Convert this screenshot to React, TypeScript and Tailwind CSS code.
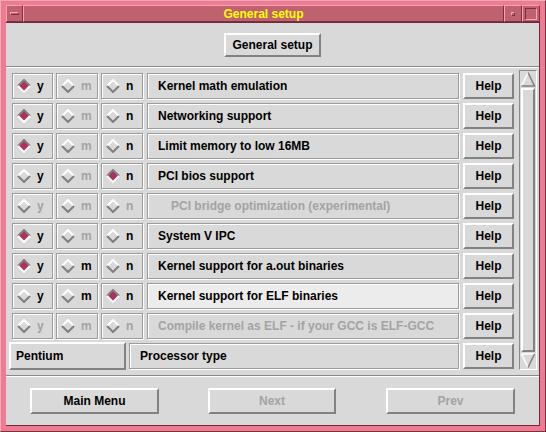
import React from 'react'

type Choice = 'y' | 'm' | 'n' | null

type Row = {
  label: string
  sel: Choice
  mOk: boolean
  disabled?: boolean
  indent?: boolean
  active?: boolean
}

const rows: Row[] = [
  { label: 'Kernel math emulation', sel: 'y', mOk: false },
  { label: 'Networking support', sel: 'y', mOk: false },
  { label: 'Limit memory to low 16MB', sel: 'y', mOk: false },
  { label: 'PCI bios support', sel: 'n', mOk: false },
  { label: 'PCI bridge optimization (experimental)', sel: null, mOk: false, disabled: true, indent: true },
  { label: 'System V IPC', sel: 'y', mOk: false },
  { label: 'Kernel support for a.out binaries', sel: 'y', mOk: true },
  { label: 'Kernel support for ELF binaries', sel: 'n', mOk: true, active: true },
  { label: 'Compile kernel as ELF - if your GCC is ELF-GCC', sel: null, mOk: false, disabled: true },
]

const raised = 'border-2 border-t-white border-l-white border-b-[#828282] border-r-[#828282]'
const groove = 'border border-[#9c9c9c] shadow-[inset_1px_1px_0_#fff,1px_1px_0_#fff]'

function Diamond({ on }: { on: boolean }) {
  return (
    <svg width="14" height="14" viewBox="0 0 14 14" className="shrink-0">
      <polygon points="7,1 13,7 7,13 1,7" fill={on ? '#b03060' : '#d9d9d9'} />
      <polyline points="1,7 7,1 13,7" fill="none" stroke={on ? '#7f7f7f' : '#ffffff'} strokeWidth="2" />
      <polyline points="1,7 7,13 13,7" fill="none" stroke={on ? '#ffffff' : '#7f7f7f'} strokeWidth="2" />
    </svg>
  )
}

function Radio({ letter, on, dim, w }: { letter: string; on: boolean; dim: boolean; w: string }) {
  return (
    <div className={`${groove} ${w} h-[26px] flex items-center pl-[4px] gap-[6px]`}>
      <Diamond on={on} />
      <span className={dim ? 'text-[#a3a3a3]' : 'text-black'}>{letter}</span>
    </div>
  )
}

function HelpButton() {
  return (
    <div className={`${raised} w-[51px] h-[26px] flex items-center justify-center`}>Help</div>
  )
}

function TitleBar() {
  return (
    <div className="flex h-[18px] bg-[#c0616f] border-b border-[#6e2a3a]">
      <div className="w-[17px] border border-t-[#f6a3b3] border-l-[#f6a3b3] border-b-[#7a3242] border-r-[#7a3242] flex items-center justify-center">
        <div className="w-[9px] h-[3px] border border-t-[#f6a3b3] border-l-[#f6a3b3] border-b-[#7a3242] border-r-[#7a3242]" />
      </div>
      <div className="flex-1 border border-t-[#f6a3b3] border-l-[#f6a3b3] border-b-[#7a3242] border-r-[#7a3242] flex items-center justify-center text-[#ffff00] leading-none">
        General setup
      </div>
      <div className="w-[18px] border border-t-[#f6a3b3] border-l-[#f6a3b3] border-b-[#7a3242] border-r-[#7a3242] flex items-center justify-center">
        <div className="w-[4px] h-[4px] border border-t-[#f6a3b3] border-l-[#f6a3b3] border-b-[#7a3242] border-r-[#7a3242]" />
      </div>
      <div className="w-[18px] border border-t-[#f6a3b3] border-l-[#f6a3b3] border-b-[#7a3242] border-r-[#7a3242] flex items-center justify-center">
        <div className="w-[12px] h-[12px] border border-t-[#7a3242] border-l-[#7a3242] border-b-[#f6a3b3] border-r-[#f6a3b3]" />
      </div>
    </div>
  )
}

function ScrollBar() {
  return (
    <div className="w-[18px] h-[300px] border border-t-[#8a8a8a] border-l-[#8a8a8a] border-b-white border-r-white flex flex-col">
      <svg width="16" height="17" viewBox="0 0 16 17" className="shrink-0">
        <polyline points="1.5,15 8,1.5" fill="none" stroke="#ffffff" strokeWidth="1.5" />
        <polyline points="8,1.5 14.5,15 1.5,15" fill="none" stroke="#7f7f7f" strokeWidth="1.5" />
      </svg>
      <div className={`${raised} flex-1 mx-[1px]`} />
      <svg width="16" height="17" viewBox="0 0 16 17" className="shrink-0">
        <polyline points="1.5,2 14.5,2" fill="none" stroke="#ffffff" strokeWidth="1.5" />
        <polyline points="1.5,2 8,15.5" fill="none" stroke="#ffffff" strokeWidth="1.5" />
        <polyline points="8,15.5 14.5,2" fill="none" stroke="#7f7f7f" strokeWidth="1.5" />
      </svg>
    </div>
  )
}

function OptionRow({ row }: { row: Row }) {
  const dis = !!row.disabled
  return (
    <div className="flex items-center h-[26px]">
      <Radio letter="y" on={row.sel === 'y'} dim={dis} w="w-[41px]" />
      <div className="w-[3px]" />
      <Radio letter="m" on={row.sel === 'm'} dim={dis || !row.mOk} w="w-[42px]" />
      <div className="w-[3px]" />
      <Radio letter="n" on={row.sel === 'n'} dim={dis} w="w-[42px]" />
      <div className="w-[4px]" />
      <div
        className={`${groove} w-[312px] h-[26px] flex items-center ${row.indent ? 'pl-[23px]' : 'pl-[10px]'} ${
          row.active ? 'bg-[#ececec]' : ''
        } ${dis ? 'text-[#a3a3a3]' : 'text-black'} whitespace-nowrap overflow-hidden`}
      >
        {row.label}
      </div>
      <div className="w-[4px]" />
      <HelpButton />
    </div>
  )
}

export default function App() {
  return (
    <div className="w-[546px] h-[432px] bg-[#ee7b92] border border-t-[#f8aab8] border-l-[#f8aab8] border-b-[#7a3242] border-r-[#7a3242] pt-[4px] px-[5px] pb-[5px] flex flex-col font-['Liberation_Sans',Arial,sans-serif] text-[12px] font-bold select-none">
      <TitleBar />
      <div className="flex-1 bg-[#d9d9d9] flex flex-col border-b border-r border-[#6e2a3a]">
        {/* header */}
        <div className="h-[43px] flex justify-center pt-[10px]">
          <div className={`${raised} w-[97px] h-[24px] flex items-center justify-center`}>General setup</div>
        </div>
        <div className="border-t border-[#8a8a8a] border-b border-b-white" />

        {/* options */}
        <div className="flex pl-[6px] pt-[2px]">
          <div className="flex flex-col gap-[4px] pt-[3px]">
            {rows.map(r => (
              <OptionRow key={r.label} row={r} />
            ))}
            <div className="flex items-center h-[28px] ml-[-3px] mt-[-1px]">
              <div className={`${raised} w-[117px] h-[28px] flex items-center pl-[5px]`}>Pentium</div>
              <div className="w-[3px]" />
              <div className={`${groove} w-[330px] h-[26px] flex items-center pl-[10px]`}>Processor type</div>
              <div className="w-[4px]" />
              <HelpButton />
            </div>
          </div>
          <div className="w-[5px]" />
          <ScrollBar />
        </div>

        <div className="mt-[5px] border-t border-[#8a8a8a] border-b border-b-white" />

        {/* bottom buttons */}
        <div className="flex pl-[24px] pt-[11px]">
          <div className={`${raised} w-[129px] h-[26px] flex items-center justify-center`}>Main Menu</div>
          <div className="w-[49px]" />
          <div className={`${raised} w-[128px] h-[26px] flex items-center justify-center text-[#a3a3a3]`}>Next</div>
          <div className="w-[50px]" />
          <div className={`${raised} w-[129px] h-[26px] flex items-center justify-center text-[#a3a3a3]`}>Prev</div>
        </div>
      </div>
    </div>
  )
}
